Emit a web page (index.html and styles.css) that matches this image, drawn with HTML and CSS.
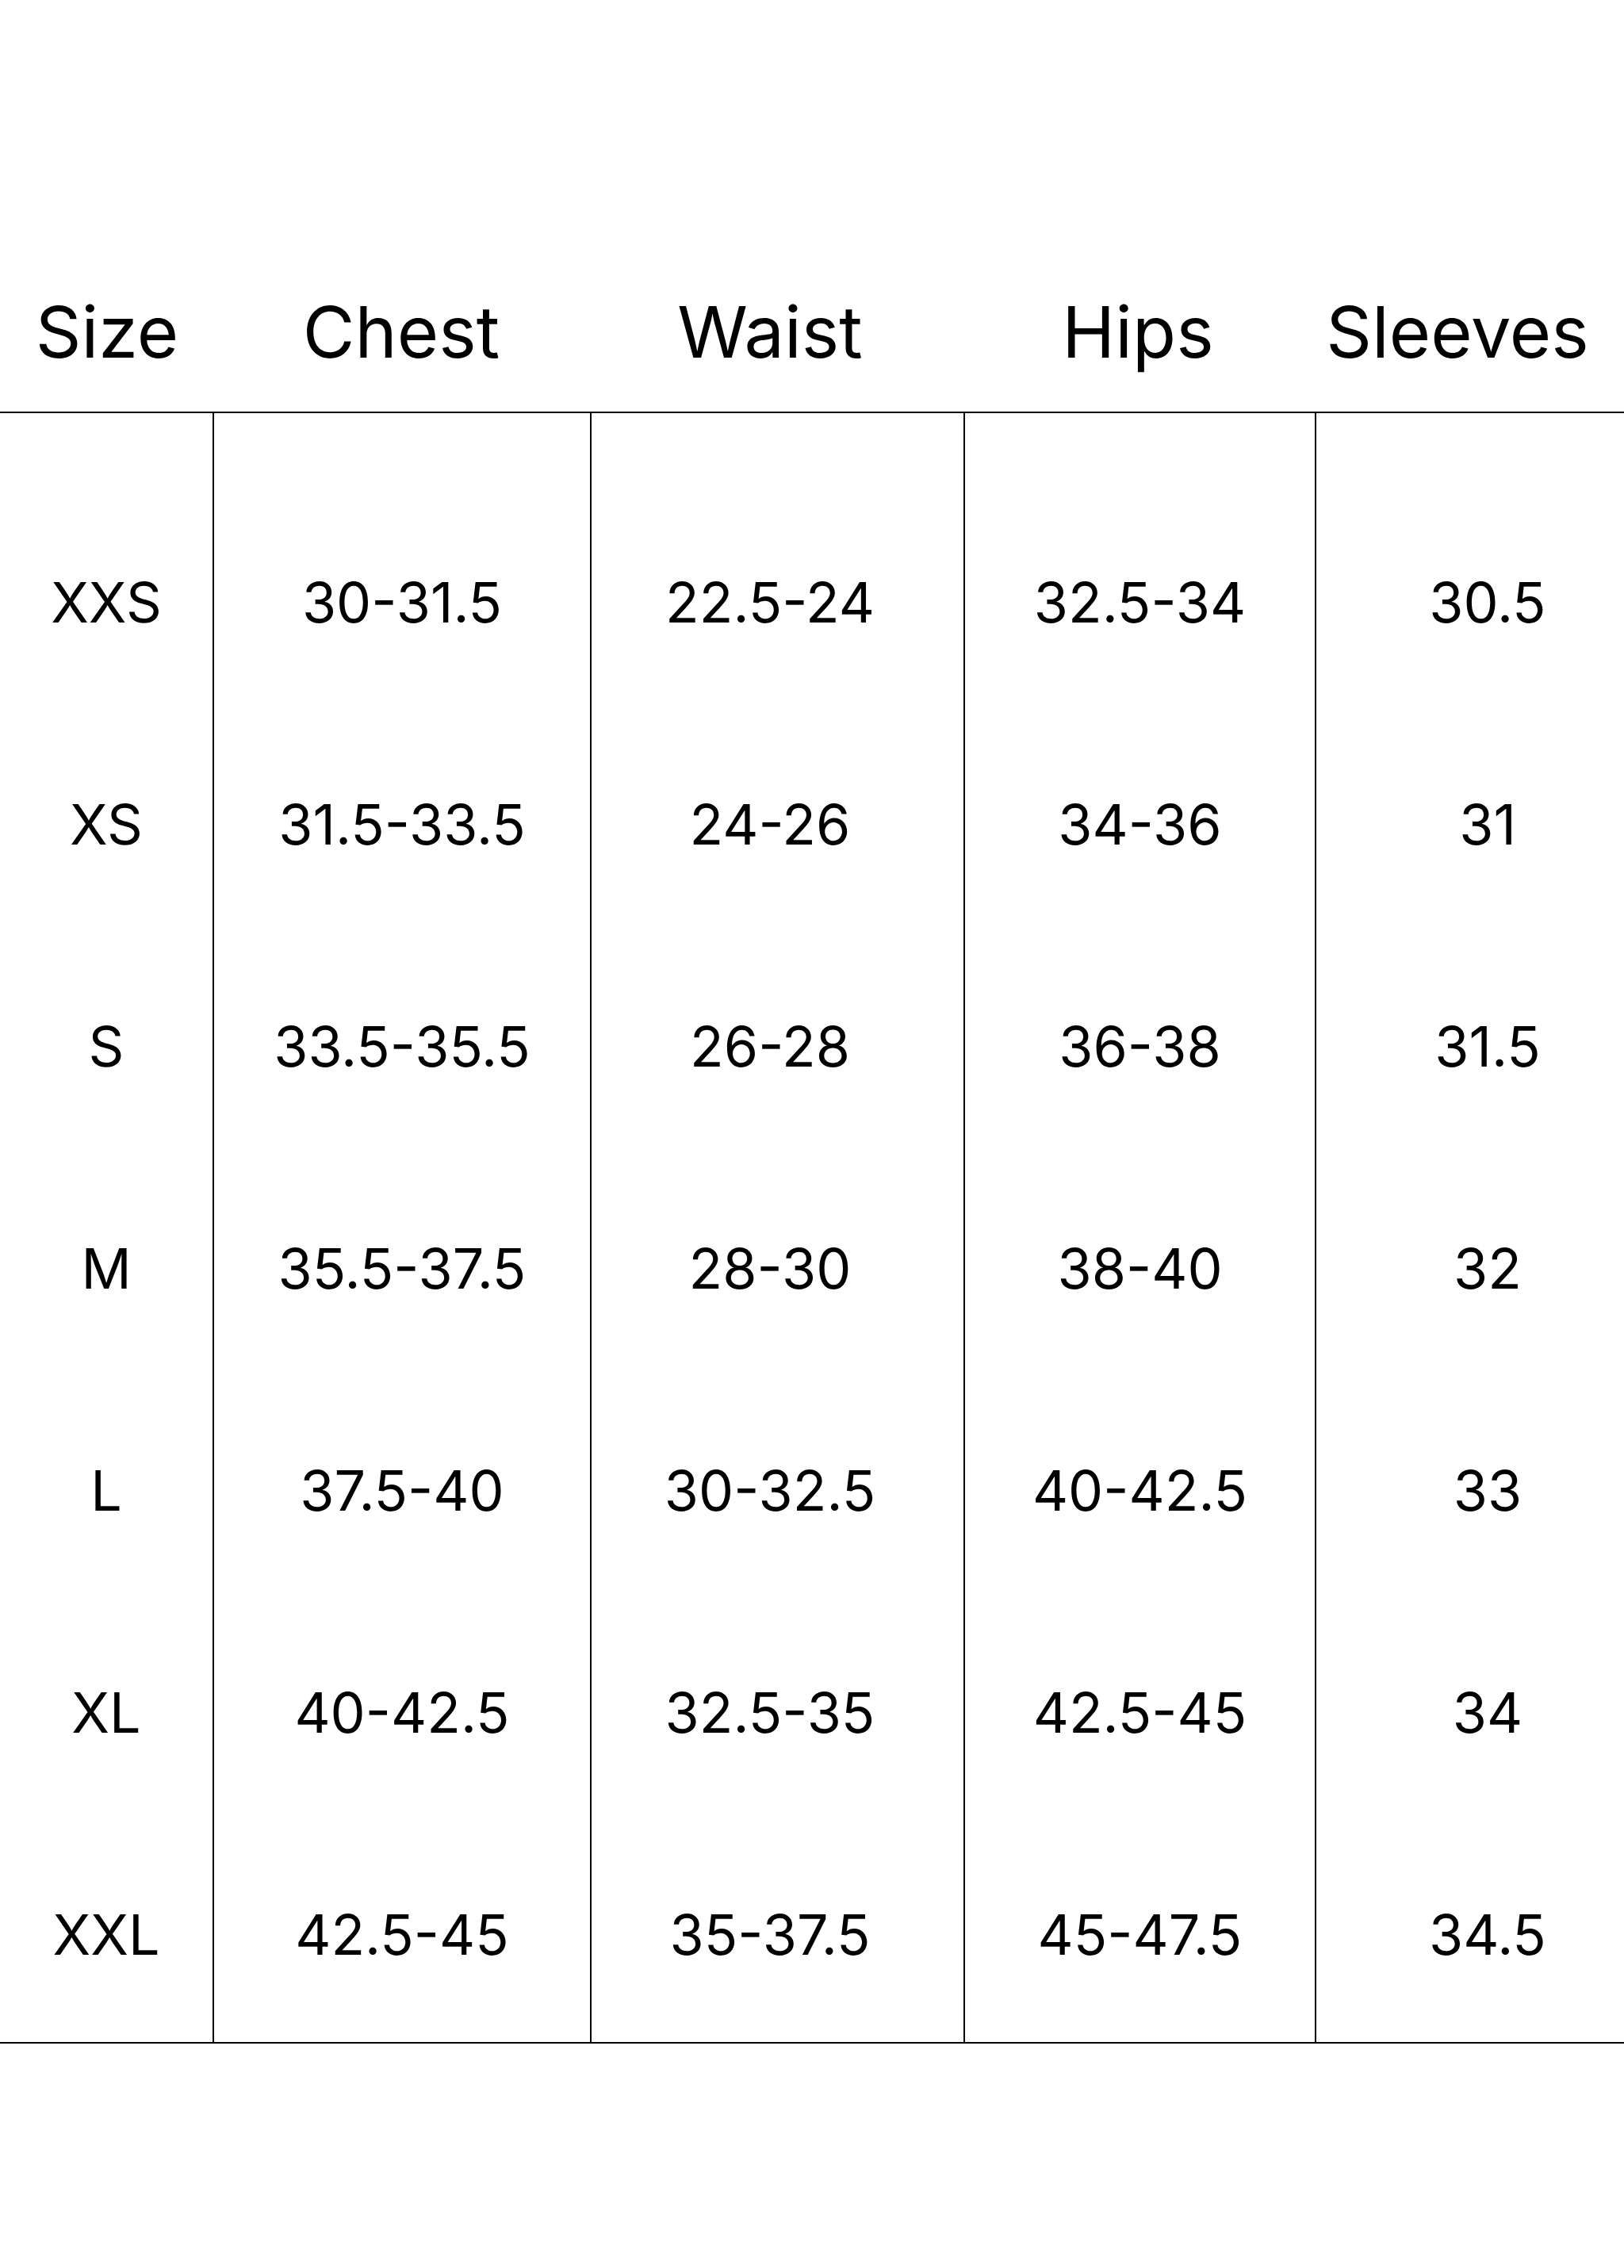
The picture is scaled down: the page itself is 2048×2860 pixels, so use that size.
FILE: index.html
```html
<!DOCTYPE html>
<html lang="en">
<head>
<meta charset="utf-8">
<title>Size Chart</title>
<link rel="stylesheet" href="styles.css">
</head>
<body>
<div class="chart">
  <div class="head">
    <div class="h">Size</div>
    <div class="h">Chest</div>
    <div class="h">Waist</div>
    <div class="h">Hips</div>
    <div class="h">Sleeves</div>
  </div>
  <div class="data">
    <div class="col c-size">
      <div>XXS</div><div>XS</div><div>S</div><div>M</div><div>L</div><div>XL</div><div>XXL</div>
    </div>
    <div class="col c-chest">
      <div>30-31.5</div><div>31.5-33.5</div><div>33.5-35.5</div><div>35.5-37.5</div><div>37.5-40</div><div>40-42.5</div><div>42.5-45</div>
    </div>
    <div class="col c-waist">
      <div>22.5-24</div><div>24-26</div><div>26-28</div><div>28-30</div><div>30-32.5</div><div>32.5-35</div><div>35-37.5</div>
    </div>
    <div class="col c-hips">
      <div>32.5-34</div><div>34-36</div><div>36-38</div><div>38-40</div><div>40-42.5</div><div>42.5-45</div><div>45-47.5</div>
    </div>
    <div class="col c-sleeves">
      <div>30.5</div><div>31</div><div>31.5</div><div>32</div><div>33</div><div>34</div><div>34.5</div>
    </div>
  </div>
</div>
</body>
</html>
```
FILE: styles.css
```css
html, body {
  margin: 0;
  padding: 0;
  background: #ffffff;
}
body {
  width: 2048px;
  min-height: 2860px;
  font-family: Inter, "Noto Sans", "Liberation Sans", sans-serif;
  color: #000000;
}
.chart {
  padding-top: 374px;
}
.head {
  display: grid;
  grid-template-columns: 270px 472px 458px 470px 336px;
  font-size: 90px;
  line-height: 90px;
  padding-bottom: 55px;
  border-bottom: 2px solid #000;
  text-align: center;
}
.data {
  display: flex;
  border-bottom: 2px solid #000;
}
.col {
  display: flex;
  flex-direction: column;
  gap: 10px;
  padding-top: 104px;
  font-size: 70px;
  line-height: 270px;
  text-align: center;
  box-sizing: border-box;
}
.c-size { width: 268px; }
.c-chest { width: 476px; border-left: 2px solid #000; }
.c-waist { width: 471px; border-left: 2px solid #000; padding-right: 19px; }
.c-hips { width: 443px; border-left: 2px solid #000; }
.c-sleeves { width: 390px; border-left: 2px solid #000; padding-left: 44px; }
```
